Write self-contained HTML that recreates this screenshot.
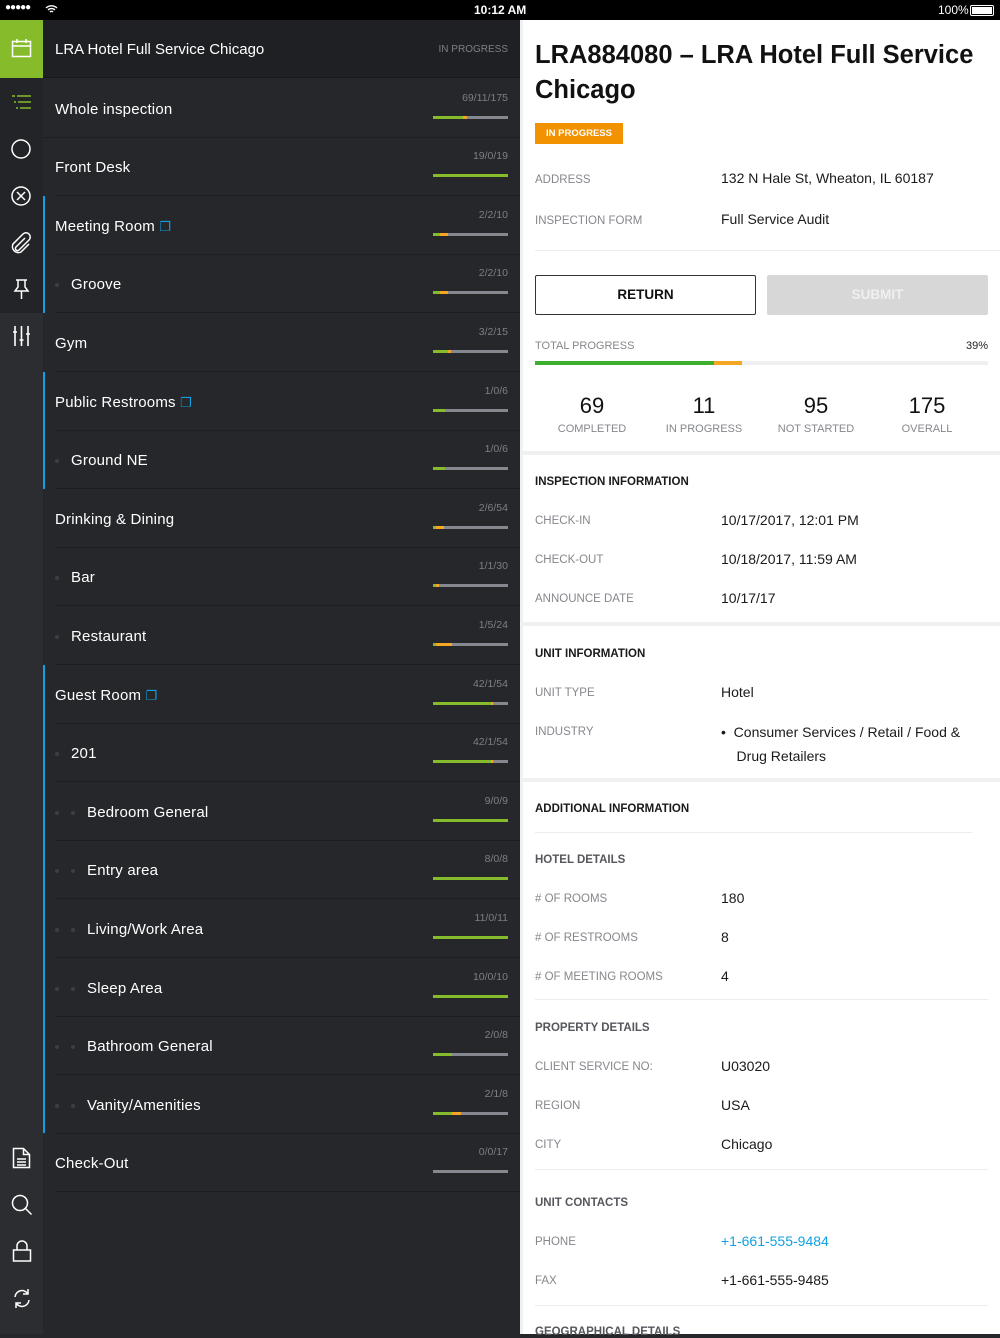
<!DOCTYPE html>
<html><head><meta charset="utf-8"><style>
*{margin:0;padding:0;box-sizing:border-box}
body{width:1000px;height:1334px;overflow:hidden;background:#26272b;font-family:"Liberation Sans",sans-serif;position:relative}
.a{position:absolute;white-space:nowrap}
#sb{position:absolute;left:0;top:0;width:1000px;height:20px;background:#000;color:#fff;font-size:12px}
.row{position:absolute;left:43px;width:477px;height:59px}
.row .t{position:absolute;left:12px;top:1px;line-height:59px;color:#fff;font-size:15px;letter-spacing:.2px}
.row .c{position:absolute;right:12px;top:13px;color:#7d7f84;font-size:10.5px}
.row .b{position:absolute;right:12px;top:37px;width:75px;height:3px;background:#85888e;overflow:hidden}
.row .b i{position:absolute;top:0;height:3px}
.row .ln{position:absolute;left:12px;right:0;bottom:0;height:1px;background:#1d1e21}
.dot{display:inline-block;width:4px;height:4px;border-radius:2px;background:#3c3e43;vertical-align:middle;margin-right:12px}
.bl{position:absolute;left:43px;width:2px;background:#12a0e0}
.lab{position:absolute;left:535px;color:#85878c;font-size:11.5px;white-space:nowrap}
.val{position:absolute;left:721px;color:#1a1a1a;font-size:14px;white-space:nowrap}
.hd{position:absolute;left:535px;color:#1a1a1a;font-size:11.5px;font-weight:bold;white-space:nowrap}
.sh{position:absolute;left:535px;color:#55575c;font-size:11.5px;font-weight:bold;white-space:nowrap}
.band{position:absolute;left:523px;width:477px;height:4px;background:#eff0f2}
.hl{position:absolute;left:535px;height:1px;background:#ececee}
</style></head><body>
<div id="sb"><span class="a" style="left:5px;top:2px;font-size:10px;letter-spacing:-1px">●●●●●</span>
<svg class="a" style="left:45px;top:4px" width="13" height="10" viewBox="0 0 13 10"><path d="M1 4a8 8 0 0 1 11 0M3 6a5 5 0 0 1 7 0M5 8a2 2 0 0 1 3 0" stroke="#fff" stroke-width="1.4" fill="none"/></svg>
<span class="a" style="left:474px;top:3px;font-weight:bold">10:12 AM</span>
<span class="a" style="left:938px;top:3px">100%</span>
<div class="a" style="left:970px;top:5px;width:24px;height:11px;border:1px solid #fff;border-radius:2px;padding:1px"><div style="background:#fff;width:100%;height:100%"></div></div></div>

<div class="a" style="left:0;top:20px;width:43px;height:1314px;background:#2c2d31"></div>
<div class="a" style="left:0;top:78px;width:43px;height:235px;background:#232427"></div>
<div class="a" style="left:0;top:20px;width:43px;height:58px;background:#86bc2b"></div>
<svg class="a" style="left:11px;top:38px" width="21" height="21" viewBox="0 0 21 21" fill="none" stroke="#fff" stroke-width="1.5"><rect x="1.5" y="3.5" width="18" height="15"/><path d="M1.5 8h18M6 1v4M15 1v4"/></svg>
<svg class="a" style="left:11px;top:94px" width="21" height="16" viewBox="0 0 21 16" stroke="#86bc2b" stroke-width="1.5"><path d="M1 2h3M6 2h14M3 8h2M7 8h13M5 14h2M9 14h11"/></svg>
<svg class="a" style="left:10px;top:138px" width="22" height="22"><circle cx="11" cy="11" r="9" fill="none" stroke="#fff" stroke-width="1.5"/></svg>
<svg class="a" style="left:10px;top:185px" width="22" height="22"><circle cx="11" cy="11" r="9" fill="none" stroke="#fff" stroke-width="1.5"/><path d="M7 7l8 8M15 7l-8 8" stroke="#fff" stroke-width="1.5"/></svg>
<svg class="a" style="left:10px;top:232px" width="22" height="22" viewBox="0 0 22 22" fill="none" stroke="#fff" stroke-width="1.5"><path d="M15 6l-9 9a2 2 0 0 0 3 3l10-10a4 4 0 0 0-6-6L3 12a6 6 0 0 0 8 8l8-8"/></svg>
<svg class="a" style="left:11px;top:278px" width="21" height="22" viewBox="0 0 21 22" fill="none" stroke="#fff" stroke-width="1.5"><path d="M5 2h11M7 2v7l-3 4h13l-3-4V2M10.5 13v8"/></svg>
<svg class="a" style="left:11px;top:325px" width="21" height="22" viewBox="0 0 21 22" stroke="#fff" stroke-width="1.6"><path d="M4 1v20M10.5 1v20M17 1v20M2 7h4M8.5 15h4M15 9h4"/></svg>
<svg class="a" style="left:12px;top:1147px" width="19" height="22" viewBox="0 0 19 22" fill="none" stroke="#fff" stroke-width="1.5"><path d="M1.5 1.5h10l6 6v13h-16z M11.5 1.5v6h6M5 12h9M5 15h9M5 18h9"/></svg>
<svg class="a" style="left:11px;top:1194px" width="22" height="22" viewBox="0 0 22 22" fill="none" stroke="#fff" stroke-width="1.5"><circle cx="9" cy="9" r="7.5"/><path d="M14.5 14.5l6 6"/></svg>
<svg class="a" style="left:12px;top:1240px" width="20" height="22" viewBox="0 0 20 22" fill="none" stroke="#fff" stroke-width="1.5"><rect x="1.5" y="10" width="17" height="11"/><path d="M5 10V6a5 5 0 0 1 10 0v4"/></svg>
<svg class="a" style="left:12px;top:1288px" width="20" height="21" viewBox="0 0 20 21" fill="none" stroke="#fff" stroke-width="1.5"><path d="M3 9a7 7 0 0 1 13-3M17 12a7 7 0 0 1-13 3M16 1v5h-5M4 20v-5h5"/></svg>

<div class="a" style="left:43px;top:20px;width:477px;height:58px;background:#1f2023;border-bottom:1px solid #18191b"></div>
<div class="a" style="left:55px;top:41px;color:#fff;font-size:15px">LRA Hotel Full Service Chicago</div>
<div class="a" style="right:492px;top:44px;color:#7d7f84;font-size:10px">IN PROGRESS</div>

<div class="row" style="top:78.6px"><div class="t">Whole inspection</div><div class="c">69/11/175</div><div class="b"><i style="left:0;width:29.6px;background:#86bc2b"></i><i style="left:29.6px;width:4.7px;background:#f5a623"></i></div><div class="ln" style="left:0"></div></div>
<div class="row" style="top:137.2px"><div class="t">Front Desk</div><div class="c">19/0/19</div><div class="b"><i style="left:0;width:75px;background:#86bc2b"></i></div><div class="ln"></div></div>
<div class="row" style="top:195.8px"><div class="t">Meeting Room <span style="color:#12a0e0;font-size:13px">❐</span></div><div class="c">2/2/10</div><div class="b"><i style="left:0;width:7px;background:#86bc2b"></i><i style="left:7px;width:8px;background:#f5a623"></i></div><div class="ln"></div></div>
<div class="row" style="top:254.4px"><div class="t"><span class="dot"></span>Groove</div><div class="c">2/2/10</div><div class="b"><i style="left:0;width:7px;background:#86bc2b"></i><i style="left:7px;width:8px;background:#f5a623"></i></div><div class="ln"></div></div>
<div class="row" style="top:313px"><div class="t">Gym</div><div class="c">3/2/15</div><div class="b"><i style="left:0;width:15px;background:#86bc2b"></i><i style="left:15px;width:3px;background:#f5a623"></i></div><div class="ln"></div></div>
<div class="row" style="top:371.6px"><div class="t">Public Restrooms <span style="color:#12a0e0;font-size:13px">❐</span></div><div class="c">1/0/6</div><div class="b"><i style="left:0;width:12px;background:#86bc2b"></i></div><div class="ln"></div></div>
<div class="row" style="top:430.2px"><div class="t"><span class="dot"></span>Ground NE</div><div class="c">1/0/6</div><div class="b"><i style="left:0;width:12px;background:#86bc2b"></i></div><div class="ln"></div></div>
<div class="row" style="top:488.8px"><div class="t">Drinking &amp; Dining</div><div class="c">2/6/54</div><div class="b"><i style="left:0;width:3px;background:#86bc2b"></i><i style="left:3px;width:8px;background:#f5a623"></i></div><div class="ln"></div></div>
<div class="row" style="top:547.4px"><div class="t"><span class="dot"></span>Bar</div><div class="c">1/1/30</div><div class="b"><i style="left:0;width:3px;background:#86bc2b"></i><i style="left:3px;width:3px;background:#f5a623"></i></div><div class="ln"></div></div>
<div class="row" style="top:606px"><div class="t"><span class="dot"></span>Restaurant</div><div class="c">1/5/24</div><div class="b"><i style="left:0;width:3px;background:#86bc2b"></i><i style="left:3px;width:16px;background:#f5a623"></i></div><div class="ln"></div></div>
<div class="row" style="top:664.6px"><div class="t">Guest Room <span style="color:#12a0e0;font-size:13px">❐</span></div><div class="c">42/1/54</div><div class="b"><i style="left:0;width:58px;background:#86bc2b"></i><i style="left:58px;width:1.5px;background:#f5a623"></i></div><div class="ln"></div></div>
<div class="row" style="top:723.2px"><div class="t"><span class="dot"></span>201</div><div class="c">42/1/54</div><div class="b"><i style="left:0;width:58px;background:#86bc2b"></i><i style="left:58px;width:1.5px;background:#f5a623"></i></div><div class="ln"></div></div>
<div class="row" style="top:781.8px"><div class="t"><span class="dot"></span><span class="dot"></span>Bedroom General</div><div class="c">9/0/9</div><div class="b"><i style="left:0;width:75px;background:#86bc2b"></i></div><div class="ln"></div></div>
<div class="row" style="top:840.4px"><div class="t"><span class="dot"></span><span class="dot"></span>Entry area</div><div class="c">8/0/8</div><div class="b"><i style="left:0;width:75px;background:#86bc2b"></i></div><div class="ln"></div></div>
<div class="row" style="top:899px"><div class="t"><span class="dot"></span><span class="dot"></span>Living/Work Area</div><div class="c">11/0/11</div><div class="b"><i style="left:0;width:75px;background:#86bc2b"></i></div><div class="ln"></div></div>
<div class="row" style="top:957.6px"><div class="t"><span class="dot"></span><span class="dot"></span>Sleep Area</div><div class="c">10/0/10</div><div class="b"><i style="left:0;width:75px;background:#86bc2b"></i></div><div class="ln"></div></div>
<div class="row" style="top:1016.2px"><div class="t"><span class="dot"></span><span class="dot"></span>Bathroom General</div><div class="c">2/0/8</div><div class="b"><i style="left:0;width:19px;background:#86bc2b"></i></div><div class="ln"></div></div>
<div class="row" style="top:1074.8px"><div class="t"><span class="dot"></span><span class="dot"></span>Vanity/Amenities</div><div class="c">2/1/8</div><div class="b"><i style="left:0;width:19px;background:#86bc2b"></i><i style="left:19px;width:9px;background:#f5a623"></i></div><div class="ln"></div></div>
<div class="row" style="top:1133.4px"><div class="t">Check-Out</div><div class="c">0/0/17</div><div class="b"></div><div class="ln"></div></div>

<div class="bl" style="top:196px;height:117px"></div>
<div class="bl" style="top:372px;height:117px"></div>
<div class="bl" style="top:665px;height:468px"></div>

<div class="a" style="left:520px;top:20px;width:480px;height:1314px;background:#eff0f2"></div>
<div class="a" style="left:523px;top:20px;width:477px;height:1314px;background:#fff"></div>
<div class="a" style="left:535px;top:38px;font-size:25.5px;font-weight:bold;color:#111;line-height:35px;white-space:normal;width:460px">LRA884080 – LRA Hotel Full Service Chicago</div>
<div class="a" style="left:535px;top:123px;width:88px;height:21px;background:#f39200;color:#fff;font-size:9.5px;font-weight:bold;line-height:21px;text-align:center">IN PROGRESS</div>
<div class="lab" style="top:174px">ADDRESS</div><div class="val" style="top:170px">132 N Hale St, Wheaton, IL 60187</div>
<div class="lab" style="top:215px">INSPECTION FORM</div><div class="val" style="top:211px">Full Service Audit</div>
<div class="hl" style="top:250px;width:465px"></div>
<div class="a" style="left:535px;top:275px;width:221px;height:40px;border:1px solid #333;border-radius:2px;text-align:center;line-height:38px;font-size:13.5px;font-weight:bold;color:#111">RETURN</div>
<div class="a" style="left:767px;top:275px;width:221px;height:40px;background:#d7d7d7;border-radius:2px;text-align:center;line-height:40px;font-size:13.5px;font-weight:bold;color:#f0f0f0">SUBMIT</div>
<div class="lab" style="top:340px;font-size:11px">TOTAL PROGRESS</div>
<div class="a" style="left:966px;top:340px;font-size:11px;color:#222">39%</div>
<div class="a" style="left:535px;top:361px;width:453px;height:4px;background:#eff0f2"></div>
<div class="a" style="left:535px;top:361px;width:179px;height:4px;background:#3bb02f"></div>
<div class="a" style="left:714px;top:361px;width:28px;height:4px;background:#f5a623"></div>
<div class="a" style="left:536px;top:393px;width:112px;text-align:center;font-size:22px;color:#111">69</div>
<div class="a" style="left:536px;top:423px;width:112px;text-align:center;font-size:11px;color:#85878c">COMPLETED</div>
<div class="a" style="left:648px;top:393px;width:112px;text-align:center;font-size:22px;color:#111">11</div>
<div class="a" style="left:648px;top:423px;width:112px;text-align:center;font-size:11px;color:#85878c">IN PROGRESS</div>
<div class="a" style="left:760px;top:393px;width:112px;text-align:center;font-size:22px;color:#111">95</div>
<div class="a" style="left:760px;top:423px;width:112px;text-align:center;font-size:11px;color:#85878c">NOT STARTED</div>
<div class="a" style="left:871px;top:393px;width:112px;text-align:center;font-size:22px;color:#111">175</div>
<div class="a" style="left:871px;top:423px;width:112px;text-align:center;font-size:11px;color:#85878c">OVERALL</div>
<div class="band" style="top:451px"></div>

<div class="hd" style="top:476px">INSPECTION INFORMATION</div>
<div class="lab" style="top:515px">CHECK-IN</div><div class="val" style="top:512px">10/17/2017, 12:01 PM</div>
<div class="lab" style="top:554px">CHECK-OUT</div><div class="val" style="top:551px">10/18/2017, 11:59 AM</div>
<div class="lab" style="top:593px">ANNOUNCE DATE</div><div class="val" style="top:590px">10/17/17</div>
<div class="band" style="top:622px"></div>

<div class="hd" style="top:648px">UNIT INFORMATION</div>
<div class="lab" style="top:687px">UNIT TYPE</div><div class="val" style="top:684px">Hotel</div>
<div class="lab" style="top:726px">INDUSTRY</div><div class="val" style="top:721px;line-height:23.5px">• &nbsp;Consumer Services / Retail / Food &amp;<br>&nbsp;&nbsp;&nbsp;&nbsp;Drug Retailers</div>
<div class="band" style="top:778px"></div>

<div class="hd" style="top:803px">ADDITIONAL INFORMATION</div>
<div class="hl" style="top:832px;width:437px"></div>
<div class="sh" style="top:854px">HOTEL DETAILS</div>
<div class="lab" style="top:893px"># OF ROOMS</div><div class="val" style="top:890px">180</div>
<div class="lab" style="top:932px"># OF RESTROOMS</div><div class="val" style="top:929px">8</div>
<div class="lab" style="top:971px"># OF MEETING ROOMS</div><div class="val" style="top:968px">4</div>
<div class="hl" style="top:999px;width:453px"></div>
<div class="sh" style="top:1022px">PROPERTY DETAILS</div>
<div class="lab" style="top:1061px">CLIENT SERVICE NO:</div><div class="val" style="top:1058px">U03020</div>
<div class="lab" style="top:1100px">REGION</div><div class="val" style="top:1097px">USA</div>
<div class="lab" style="top:1139px">CITY</div><div class="val" style="top:1136px">Chicago</div>
<div class="hl" style="top:1169px;width:453px"></div>
<div class="sh" style="top:1197px">UNIT CONTACTS</div>
<div class="lab" style="top:1236px">PHONE</div><div class="val" style="top:1233px;color:#12a0e0">+1-661-555-9484</div>
<div class="lab" style="top:1275px">FAX</div><div class="val" style="top:1272px">+1-661-555-9485</div>
<div class="hl" style="top:1305px;width:453px"></div>
<div class="sh" style="top:1326px">GEOGRAPHICAL DETAILS</div>
</body></html>
